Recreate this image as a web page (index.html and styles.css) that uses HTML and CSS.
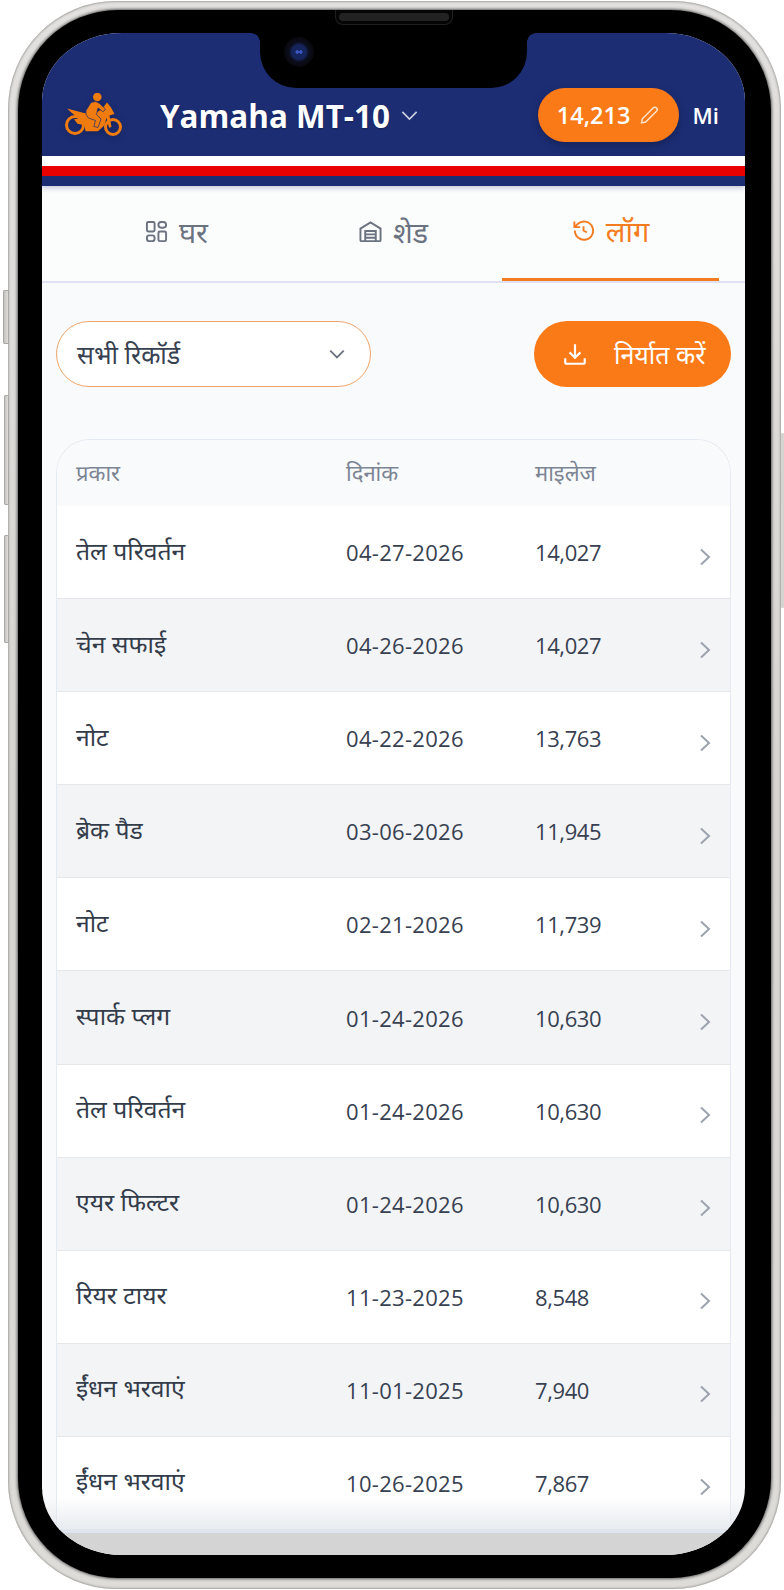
FILE: index.html
```html
<!DOCTYPE html>
<html lang="hi">
<head>
<meta charset="utf-8">
<title>Yamaha MT-10</title>
<link rel="stylesheet" href="styles.css">
</head>
<body>
<div class="device">
  <span class="side-btn btn-a"></span>
  <span class="side-btn btn-b"></span>
  <span class="side-btn btn-c"></span>
  <span class="side-btn btn-r"></span>
  <div class="bezel">
    <div class="screen">
      <header class="topbar">
        <svg class="logo" viewBox="0 0 59 44" aria-hidden="true">
          <circle class="logo-ring" cx="11" cy="32" r="8.500"/>
          <circle class="logo-ring" cx="49" cy="34" r="7.500"/>
          <path class="logo-fill" d="M3 15.500l17 4.500 10 1 8-5 5-6.500 4 5 3.500 6.500-5 1.500 2 11.500-2.500 .8-2.500-10-2 7.500-6.500 6h-12.500l-1-6-7-1.500-3.500-4.500 5-.5-8-6.500z"/>
          <circle class="logo-fill" cx="33.300" cy="4" r="4.300"/>
          <path class="logo-rider" d="M27 9.500q5-2.500 8.500 1l6 5.500-2.300 2.800-5.200-3.800-1.500 6.500 4.500 4.500-3 8.500-4.200-1 1.700-6-7-2.500q-3.500-3-2.500-7.500z"/>
        </svg>
        <div class="bike">
          <span class="bike-name">Yamaha MT-10</span>
          <svg class="bike-chev" viewBox="0 0 16 16" aria-hidden="true"><path d="M2 5l6 6 6-6"/></svg>
        </div>
        <div class="odo">
          <span>14,213</span>
          <svg viewBox="0 0 24 24" aria-hidden="true"><path d="M17 3.500a2.800 2.800 0 0 1 4 4L8 20.500l-5 1 1-5z"/></svg>
        </div>
        <span class="unit">Mi</span>
      </header>
      <div class="stripes"></div>

      <nav class="tabs">
        <a class="tab">
          <svg viewBox="0 0 24 24" aria-hidden="true"><rect x="2" y="2" width="8" height="10" rx="1.500"/><rect x="14" y="2" width="8" height="6" rx="3"/><rect x="14" y="12" width="8" height="10" rx="1.500"/><rect x="2" y="16" width="8" height="6" rx="2.500"/></svg>
          <span>घर</span>
        </a>
        <a class="tab">
          <svg viewBox="0 0 24 24" aria-hidden="true"><path d="M1.500 21V9l10.500-6.500L22.500 9v12a1 1 0 0 1-1 1h-19a1 1 0 0 1-1-1z"/><path d="M6.500 22V11.500h11V22M6.500 15h11M6.500 18.500h11"/></svg>
          <span>शेड</span>
        </a>
        <a class="tab tab-active">
          <svg viewBox="0 0 24 24" aria-hidden="true"><path d="M3 12a9.500 9.500 0 1 0 3-6.800L3 8M2.500 2.500V8.500h6M12 7.500V12l3.500 2"/></svg>
          <span>लॉग</span>
        </a>
      </nav>

      <main class="content">
        <div class="controls">
          <div class="select">
            <span>सभी रिकॉर्ड</span>
            <svg viewBox="0 0 16 16" aria-hidden="true"><path d="M2 5l6 6 6-6"/></svg>
          </div>
          <button class="export">
            <svg viewBox="0 0 24 24" aria-hidden="true"><path d="M12 3v12M7 10.500l5 5 5-5M3 16v3.500a1.500 1.500 0 0 0 1.500 1.500h15a1.500 1.500 0 0 0 1.500-1.500V16"/></svg>
            <span>निर्यात करें</span>
          </button>
        </div>

        <section class="table">
          <div class="row head"><span>प्रकार</span><span>दिनांक</span><span>माइलेज</span></div>
          <div class="row"><span class="type">तेल परिवर्तन</span><span class="date">04-27-2026</span><span class="miles">14,027</span><svg class="go" viewBox="0 0 12 18" aria-hidden="true"><path d="M2 1.500l8 7.500-8 7.500"/></svg></div>
          <div class="row"><span class="type">चेन सफाई</span><span class="date">04-26-2026</span><span class="miles">14,027</span><svg class="go" viewBox="0 0 12 18" aria-hidden="true"><path d="M2 1.500l8 7.500-8 7.500"/></svg></div>
          <div class="row"><span class="type">नोट</span><span class="date">04-22-2026</span><span class="miles">13,763</span><svg class="go" viewBox="0 0 12 18" aria-hidden="true"><path d="M2 1.500l8 7.500-8 7.500"/></svg></div>
          <div class="row"><span class="type">ब्रेक पैड</span><span class="date">03-06-2026</span><span class="miles">11,945</span><svg class="go" viewBox="0 0 12 18" aria-hidden="true"><path d="M2 1.500l8 7.500-8 7.500"/></svg></div>
          <div class="row"><span class="type">नोट</span><span class="date">02-21-2026</span><span class="miles">11,739</span><svg class="go" viewBox="0 0 12 18" aria-hidden="true"><path d="M2 1.500l8 7.500-8 7.500"/></svg></div>
          <div class="row"><span class="type">स्पार्क प्लग</span><span class="date">01-24-2026</span><span class="miles">10,630</span><svg class="go" viewBox="0 0 12 18" aria-hidden="true"><path d="M2 1.500l8 7.500-8 7.500"/></svg></div>
          <div class="row"><span class="type">तेल परिवर्तन</span><span class="date">01-24-2026</span><span class="miles">10,630</span><svg class="go" viewBox="0 0 12 18" aria-hidden="true"><path d="M2 1.500l8 7.500-8 7.500"/></svg></div>
          <div class="row"><span class="type">एयर फिल्टर</span><span class="date">01-24-2026</span><span class="miles">10,630</span><svg class="go" viewBox="0 0 12 18" aria-hidden="true"><path d="M2 1.500l8 7.500-8 7.500"/></svg></div>
          <div class="row"><span class="type">रियर टायर</span><span class="date">11-23-2025</span><span class="miles">8,548</span><svg class="go" viewBox="0 0 12 18" aria-hidden="true"><path d="M2 1.500l8 7.500-8 7.500"/></svg></div>
          <div class="row"><span class="type">ईंधन भरवाएं</span><span class="date">11-01-2025</span><span class="miles">7,940</span><svg class="go" viewBox="0 0 12 18" aria-hidden="true"><path d="M2 1.500l8 7.500-8 7.500"/></svg></div>
          <div class="row"><span class="type">ईंधन भरवाएं</span><span class="date">10-26-2025</span><span class="miles">7,867</span><svg class="go" viewBox="0 0 12 18" aria-hidden="true"><path d="M2 1.500l8 7.500-8 7.500"/></svg></div>
        </section>
        <div class="fade"></div>
      </main>
      <div class="home-strip"></div>
    </div>
    <div class="notch"><span class="camera"></span></div>
    <span class="speaker"></span>
  </div>
</div>
</body>
</html>
```

FILE: styles.css
```css
* { box-sizing: border-box; }
html, body { margin: 0; height: 100%; background: #fff; }
body {
  font-family: "Open Sans", "Noto Sans", "Noto Sans Devanagari", sans-serif;
  color: #374151;
  overflow: hidden;
}
.device {
  position: relative;
  width: 773px;
  height: 1588px;
  margin: 1px 0 0 8px;
  border-radius: 108px;
  padding: 9px 10px 11px;
  background: linear-gradient(180deg, #e2e1df, #d6d5d2 50%, #dddcd9);
  box-shadow: inset 0 0 2px 1px #a5a4a1;
}
.bezel {
  position: relative;
  height: 100%;
  padding: 23px 26px 23px 24px;
  background: #000;
  border-radius: 100px;
  box-shadow: 0 0 3px 1px #5c5c5c;
}
.screen {
  position: relative;
  height: 100%;
  width: 703px;
  border-radius: 80px / 68px;
  overflow: hidden;
  background: #f9fafb;
  display: flex;
  flex-direction: column;
}
.notch {
  position: absolute;
  top: 0;
  left: 242px;
  width: 267px;
  height: 78px;
  background: #000;
  border-radius: 0 0 36px 36px;
}
.notch::before,
.notch::after {
  content: "";
  position: absolute;
  top: 23px;
  width: 9px;
  height: 9px;
}
.notch::before {
  left: -9px;
  background: radial-gradient(circle at 0 100%, transparent 8.500px, #000 9px);
}
.notch::after {
  right: -9px;
  background: radial-gradient(circle at 100% 100%, transparent 8.500px, #000 9px);
}
.camera {
  position: absolute;
  left: 24px;
  top: 27px;
  width: 30px;
  height: 30px;
  border-radius: 50%;
  background:
    radial-gradient(circle at 44% 50%, #3a55c0 0 1.500px, transparent 2px),
    radial-gradient(circle at 56% 50%, #3a55c0 0 1.500px, transparent 2px),
    radial-gradient(circle, #16245c 0 7px, #0b0d1a 10px, #08080c 15px);
}
.speaker {
  position: absolute;
  left: 317px;
  top: 0;
  width: 118px;
  height: 15px;
  background: #050505;
  border: 1px solid #1f1f1f;
  border-top: 0;
  border-radius: 0 0 8px 8px;
  padding: 3px 3px 2px;
}
.speaker::after {
  content: "";
  display: block;
  height: 8px;
  background: #222;
  border-radius: 4px;
}
.side-btn {
  position: absolute;
  background: linear-gradient(90deg, #c4c3c0, #dedddb);
  border: 1px solid #a9a8a5;
  border-radius: 1px;
}
.btn-a { left: -5px; top: 289px; width: 6px; height: 54px; }
.btn-b { left: -4px; top: 394px; width: 5px; height: 110px; }
.btn-c { left: -4px; top: 534px; width: 5px; height: 108px; }
.btn-r { right: -3px; top: 432px; width: 3px; height: 175px; background: #d5d4d1; border: 0; }

.topbar {
  flex: none;
  height: 123px;
  padding: 41px 26px 0 22px;
  background: #1c2d74;
  display: flex;
  align-items: center;
  color: #fff;
}
.logo { width: 59px; height: 44px; margin-right: 37px; flex: none; filter: drop-shadow(0 2px 3px rgba(0,0,0,.25)); }
.logo-ring { fill: none; stroke: #f07c10; stroke-width: 3; }
.logo-fill { fill: #f07c10; }
.logo-rider { fill: #f07c10; stroke: #1c2d74; stroke-width: .7; }
.bike { display: flex; align-items: center; gap: 10px; }
.bike-name { font-size: 31.400px; font-weight: 700; text-shadow: 0 1px 2px rgba(0,0,0,.3); }
.bike-chev { width: 19px; height: 19px; fill: none; stroke: #cbd0de; stroke-width: 1.400; }
.odo {
  margin-left: auto;
  margin-right: 1px;
  width: 141px;
  height: 54px;
  border-radius: 27px;
  background: #fb7a18;
  box-shadow: 0 3px 8px rgba(0,0,0,.25);
  display: flex;
  align-items: center;
  justify-content: center;
  gap: 9px;
  font-size: 23.500px;
  font-weight: 600;
}
.odo svg { width: 20px; height: 20px; fill: none; stroke: #ffe3cc; stroke-width: 1.800; }
.unit { margin-left: 13px; font-size: 22px; font-weight: 600; }
.stripes {
  flex: none;
  height: 30px;
  background: linear-gradient(#fff 0 10px, #e90000 10px 20px, #1c2d74 20px);
  box-shadow: 0 2px 5px rgba(28,45,116,.25);
  position: relative;
}
.tabs {
  flex: none;
  height: 97px;
  padding: 0 26px;
  display: grid;
  grid-template-columns: repeat(3, 1fr);
  background: #fbfcfc;
  border-bottom: 2px solid #e0e1f4;
}
.tab {
  display: flex;
  align-items: center;
  justify-content: center;
  gap: 11px;
  font-size: 29px;
  color: #6b7280;
  height: 97px;
  padding-bottom: 6px;
}
.tab svg { width: 23px; height: 23px; fill: none; stroke: currentColor; stroke-width: 2; }
.tab-active { color: #f47c20; border-bottom: 3px solid #f47c20; margin-bottom: -2px; height: 95px; padding-bottom: 3px; }
.content {
  flex: 1;
  min-height: 0;
  position: relative;
  overflow: hidden;
  padding: 38px 14px 0;
}
.controls { display: flex; justify-content: space-between; }
.select {
  width: 315px;
  height: 66px;
  border: 1.500px solid #eda56b;
  border-radius: 33px;
  background: #fff;
  padding: 0 20px;
  display: flex;
  align-items: center;
  justify-content: space-between;
  font-size: 25px;
  color: #374151;
}
.select svg { width: 18px; height: 18px; fill: none; stroke: #6b7280; stroke-width: 1.600; margin-right: 4px; }
.export {
  width: 197px;
  height: 66px;
  border: 0;
  border-radius: 33px;
  background: #fb7a18;
  color: #fff;
  font: inherit;
  font-size: 25px;
  display: flex;
  align-items: center;
  gap: 26px;
  padding: 0 0 0 28px;
}
.export svg { width: 26px; height: 26px; fill: none; stroke: #fff; stroke-width: 2; flex: none; }
.table {
  margin-top: 52px;
  border: 1px solid #e4eaf3;
  border-bottom: 0;
  border-radius: 34px 34px 0 0;
  overflow: hidden;
  background: #fff;
}
.row {
  height: 93.100px;
  padding: 0 19.500px 0 19px;
  display: grid;
  grid-template-columns: 270px 189px 1fr 12px;
  align-items: center;
  font-size: 22px;
  color: #374151;
  border-bottom: 1px solid #e5e7eb;
}
.row:nth-child(odd) { background: #f3f4f6; }
.row.head {
  height: 66px;
  background: #f9fafb;
  color: #7c8594;
  font-size: 22px;
  border-bottom: 0;
  padding-bottom: 2px;
}
.type { font-size: 24.700px; padding-bottom: 4px; color: #333c4a; }
.date { letter-spacing: .3px; }
.miles { letter-spacing: -.4px; }
.go { width: 12px; height: 18px; fill: none; stroke: #9ca3af; stroke-width: 2; margin-top: 9px; }
.fade {
  position: absolute;
  left: 0;
  right: 0;
  bottom: 0;
  height: 36px;
  background: linear-gradient(rgba(225,229,235,0), rgba(225,229,235,.8));
  border-bottom: 3px solid #dfe5ee;
}
.home-strip { flex: none; height: 22px; background: #d4d4d4; }
```
